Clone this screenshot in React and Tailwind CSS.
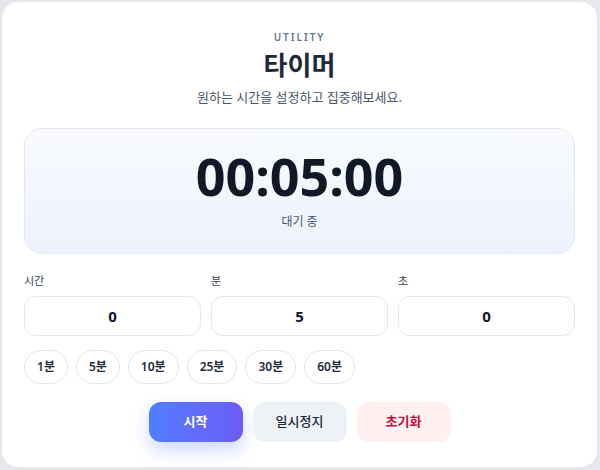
import { useState } from "react";

const presets = [1, 5, 10, 25, 30, 60];

const Field = ({ label, value }) => (
  <label className="flex flex-col gap-[7px]">
    <span className="text-[11px] leading-4 text-gray-700">{label}</span>
    <input
      type="text"
      readOnly
      value={value}
      className="h-10 w-full rounded-xl border border-[#e5e7eb] bg-white text-center text-[15px] font-bold text-gray-900 outline-none"
    />
  </label>
);

const App = () => {
  const [min, setMin] = useState(5);

  return (
    <div
      className="h-[470px] w-[600px] bg-[#e6e8eb] p-[2px] pr-[3px] pb-[3px]"
      style={{ fontFamily: '"Noto Sans", "Noto Sans CJK KR", sans-serif' }}
    >
      <div className="flex h-full flex-col rounded-2xl bg-white px-[22px] pt-[29px]">
        <div className="flex flex-col items-center">
          <p className="text-[10px] font-semibold leading-3 tracking-[0.2em] text-slate-500">UTILITY</p>
          <h1 className="mt-[4px] text-[26px] font-bold leading-9 text-gray-800">타이머</h1>
          <p className="mt-[4px] text-[13px] leading-5 text-gray-600">원하는 시간을 설정하고 집중해보세요.</p>
        </div>

        <div className="mt-[21px] flex h-[126px] flex-col items-center rounded-[18px] border border-[#e3e8f1] bg-linear-to-b from-[#f8fafe] to-[#edf2fc] pt-[19px]">
          <div className="text-[52px] font-bold leading-[56px] text-[#111827]">
            00:{String(min).padStart(2, "0")}:00
          </div>
          <div className="mt-[10px] text-xs leading-4 text-slate-600">대기 중</div>
        </div>

        <div className="mt-[19px] grid grid-cols-3 gap-[10px]">
          <Field label="시간" value="0" />
          <Field label="분" value={min} />
          <Field label="초" value="0" />
        </div>

        <div className="mt-[14px] flex gap-2">
          {presets.map((p) => (
            <button
              key={p}
              onClick={() => setMin(p)}
              className="h-[34px] rounded-full border border-[#e5e7eb] bg-white px-3 text-xs font-semibold text-gray-800"
            >
              {p}분
            </button>
          ))}
        </div>

        <div className="mt-[18px] flex justify-center gap-[10px]">
          <button className="h-10 w-[94px] rounded-xl bg-linear-to-r from-[#4f7dff] to-[#6c5cf4] text-[13px] font-semibold text-white shadow-[0_8px_18px_rgba(79,110,255,0.28)]">
            시작
          </button>
          <button className="h-10 w-[94px] rounded-xl bg-[#eef1f6] text-[13px] font-medium text-gray-800">
            일시정지
          </button>
          <button className="h-10 w-[94px] rounded-xl bg-[#fff0f2] text-[13px] font-semibold text-[#be123c]">
            초기화
          </button>
        </div>
      </div>
    </div>
  );
};

export default App;
